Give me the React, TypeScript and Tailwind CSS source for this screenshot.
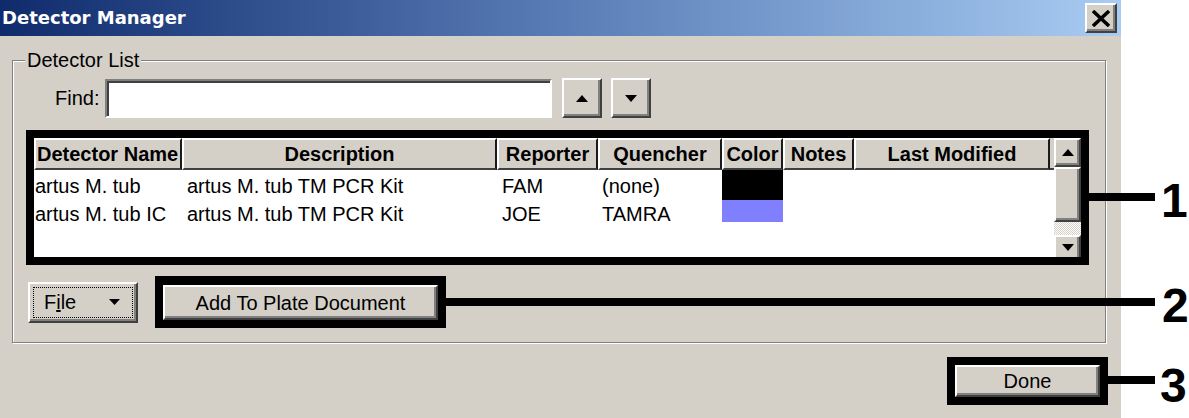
import React from 'react';

const raised =
  'border-2 border-t-white border-l-white border-r-[#404040] border-b-[#404040] shadow-[inset_-2px_-2px_0_#808080] bg-[#d4d0c8]';

function Tri({ down = false }: { down?: boolean }) {
  return (
    <svg width="12" height="7" viewBox="0 0 12 7">
      {down ? <polygon points="0,0 12,0 6,7" fill="#000" /> : <polygon points="0,7 12,7 6,0" fill="#000" />}
    </svg>
  );
}

const rows = [
  { name: 'artus M. tub', desc: 'artus M. tub TM PCR Kit', rep: 'FAM', q: '(none)', color: 'black' },
  { name: 'artus M. tub IC', desc: 'artus M. tub TM PCR Kit', rep: 'JOE', q: 'TAMRA', color: 'blue' },
];

export default function App() {
  return (
    <div className="relative flex w-[1189px] h-[418px] overflow-hidden bg-white font-['Liberation_Sans',Arial,sans-serif] text-[20px] text-black">
      <div className="flex flex-col w-[1121px] h-full bg-[#d4d0c8]">
        {/* title bar */}
        <div className="flex items-center h-[36px] bg-linear-to-r from-[#102b6c] via-[#5a7cb6] to-[#a8ccf2] pl-[2px] pr-[4px]">
          <span className="font-['DejaVu_Sans',sans-serif] font-bold text-[18px] text-white leading-none">Detector Manager</span>
          <div className={`ml-auto flex items-center justify-center w-[32px] h-[30px] ${raised}`}>
            <svg width="18" height="17" viewBox="0 0 18 17">
              <path d="M1 1 L17 16 M17 1 L1 16" stroke="#000" strokeWidth="3.5" />
            </svg>
          </div>
        </div>

        {/* group box */}
        <div className="relative ml-[12px] mt-[24px] w-[1094px] h-[283px] border border-[#808080] shadow-[inset_1px_1px_0_#fff,1px_1px_0_#fff] pt-[17px]">
          <span className="absolute -top-[12px] left-[12px] px-[2px] bg-[#d4d0c8] leading-[22px]">Detector List</span>

          <div className="flex items-center h-[40px]">
            <span className="ml-[42px] w-[42px]">Find:</span>
            <div className="ml-[8px] w-[447px] h-[39px] bg-white border-2 border-t-[#808080] border-l-[#808080] border-r-white border-b-white shadow-[inset_2px_2px_0_#404040]" />
            <div className={`ml-[10px] w-[40px] h-[40px] flex items-center justify-center ${raised}`}>
              <Tri />
            </div>
            <div className={`ml-[9px] w-[40px] h-[40px] flex items-center justify-center ${raised}`}>
              <Tri down />
            </div>
          </div>

          {/* detector list (framed) */}
          <div className="ml-[13px] mt-[12px] w-[1063px] h-[135px] border-8 border-black bg-white flex overflow-hidden">
            <div className="w-[1020px] flex flex-col">
              <div className="grid grid-cols-[148px_315px_101px_124px_61px_71px_196px_1fr] h-[32px] font-bold text-[20px]">
                {['Detector Name', 'Description', 'Reporter', 'Quencher', 'Color', 'Notes', 'Last Modified'].map((h, i) => (
                  <div
                    key={h}
                    className={`flex items-center whitespace-nowrap overflow-hidden bg-[#d4d0c8] border-t-2 border-t-white border-l-2 border-l-white border-r-2 border-r-[#1a1a1a] border-b-2 border-b-[#404040] ${i === 0 ? 'justify-start pl-[1px]' : 'justify-center'}`}
                  >
                    {h}
                  </div>
                ))}
                <div className="bg-[#d4d0c8] border-b-2 border-b-[#404040]" />
              </div>
              {rows.map((r, idx) => (
                <div
                  key={r.name}
                  className={`grid grid-cols-[148px_315px_101px_124px_61px_71px_196px_1fr] whitespace-nowrap ${idx === 0 ? 'h-[30px] pt-[3px] leading-[27px]' : 'h-[28px] leading-[28px]'}`}
                >
                  <div className="pl-[1px]">{r.name}</div>
                  <div className="pl-[5px]">{r.desc}</div>
                  <div className="pl-[5px]">{r.rep}</div>
                  <div className="pl-[4px]">{r.q}</div>
                  <div className={idx === 0 ? '-mt-[3px] h-[30px] bg-black' : 'h-[22px] bg-[#8080ff]'} />
                  <div />
                  <div />
                  <div />
                </div>
              ))}
            </div>
            {/* scrollbar */}
            <div className="w-[27px] flex flex-col bg-[#d4d0c8]">
              <div className={`h-[29px] shrink-0 flex items-center justify-center ${raised}`}>
                <Tri />
              </div>
              <div className={`h-[55px] shrink-0 ${raised}`} />
              <div className="h-[13px] shrink-0 bg-[repeating-conic-gradient(#ffffff_0_25%,#d4d0c8_0_50%)] bg-[length:2px_2px]" />
              <div className={`h-[30px] shrink-0 flex items-start justify-center pt-[7px] ${raised}`}>
                <Tri down />
              </div>
            </div>
          </div>

          {/* buttons row */}
          <div className="flex items-center mt-[11px]">
            <div className={`ml-[15px] w-[110px] h-[41px] p-[3px] ${raised}`}>
              <div className="flex items-center h-full border border-dotted border-black pl-[10px] pr-[12px]">
                <span>
                  F<span className="underline">i</span>le
                </span>
                <span className="ml-auto">
                  <svg width="11" height="6" viewBox="0 0 11 6">
                    <polygon points="0,0 11,0 5.5,6" fill="#000" />
                  </svg>
                </span>
              </div>
            </div>
            <div className="ml-[17px] w-[291px] h-[52px] border-8 border-black border-t-[9px]">
              <div className={`flex items-center justify-center h-full ${raised} border-t-white`}>Add To Plate Document</div>
            </div>
          </div>
        </div>

        {/* done row */}
        <div className="flex justify-end pr-[13px] mt-[14px]">
          <div className="w-[161px] h-[48px] border-8 border-black">
            <div className={`flex items-center justify-center h-full ${raised}`}>Done</div>
          </div>
        </div>
      </div>

      {/* callouts */}
      <div className="absolute left-[1089px] top-[172px] h-[50px] flex items-center">
        <div className="w-[66px] h-[8px] bg-black" />
        <span className="ml-[6px] mt-[8px] text-[48px] font-bold leading-none">1</span>
      </div>
      <div className="absolute left-[446px] top-[277px] h-[50px] flex items-center">
        <div className="w-[709px] h-[8px] bg-black" />
        <span className="ml-[7px] mt-[8px] text-[48px] font-bold leading-none">2</span>
      </div>
      <div className="absolute left-[1108px] top-[355px] h-[50px] flex items-center">
        <div className="w-[47px] h-[8px] bg-black" />
        <span className="ml-[5px] mt-[12px] text-[48px] font-bold leading-none">3</span>
      </div>
    </div>
  );
}
